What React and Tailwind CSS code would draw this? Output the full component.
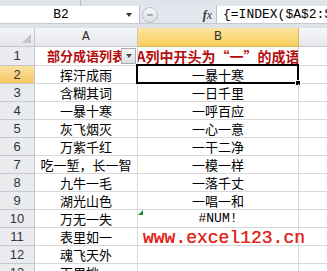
const colA = ['挥汗成雨', '含糊其词', '一暴十寒', '灰飞烟灭', '万紫千红', '吃一堑，长一智', '九牛一毛', '湖光山色', '万无一失', '表里如一', '魂飞天外', '百里挑一'];
const colB = ['一暴十寒', '一日千里', '一呼百应', '一心一意', '一干二净', '一模一样', '一落千丈', '一唱一和', '#NUM!', '', '', ''];

const cjk = { fontFamily: '"Noto Sans CJK SC", sans-serif' };
const mono = { fontFamily: '"Liberation Mono", monospace' };

const RowHead = ({ n, active }) => (
  <div
    className={`flex w-[35px] shrink-0 items-center justify-center border-b border-r border-[#c6c9ce] text-[13px] text-[#333] ${
      active ? 'bg-gradient-to-b from-[#fbe1a0] to-[#f6c862]' : 'bg-[#e9ebee]'
    }`}
    style={{ fontFamily: '"Liberation Sans", sans-serif' }}
  >
    {n}
  </div>
);

const DataRow = ({ n, a, b }) => (
  <div className="flex h-[18px]">
    <RowHead n={n} active={n === 2} />
    <div className="flex w-[103px] shrink-0 items-center justify-center whitespace-nowrap border-b border-r border-[#d8d8d8] text-[13px] text-black" style={cjk}>
      {a}
    </div>
    <div
      className="relative flex w-[161px] shrink-0 items-center justify-center whitespace-nowrap border-b border-r border-[#d8d8d8] text-[13px] text-black"
      style={b.startsWith('#') ? mono : cjk}
    >
      {b}
      {n === 2 && (
        <div className="absolute -left-[2px] -top-[2px] -right-[1px] -bottom-[1px] border-2 border-black">
          <div className="absolute -right-[4px] -bottom-[4px] h-[6px] w-[6px] border border-white bg-black" />
        </div>
      )}
      {n === 10 && (
        <div className="absolute left-0 top-0 h-0 w-0 border-l-[5px] border-t-[5px] border-l-transparent border-t-[#1e8b30] rotate-90" />
      )}
    </div>
    <div className="flex-1 border-b border-[#d8d8d8]" />
  </div>
);

export default function App() {
  return (
    <div className="relative h-[271px] w-[327px] overflow-hidden bg-white">
      {/* ribbon edge */}
      <div className="flex h-[6px] bg-[#dfe4ea]">
        <div className="w-[81px] border-r border-[#b7bec8]" />
      </div>

      {/* formula bar */}
      <div className="flex h-[18px] border-b border-[#c4cad3] bg-[#e4e8ee]">
        <div className="flex w-[140px] shrink-0 items-center border-r border-[#b9c0ca] bg-white">
          <span className="w-[122px] text-center text-[13px] text-black" style={mono}>B2</span>
          <span className="ml-[4px] h-0 w-0 border-l-[3px] border-r-[3px] border-t-[4px] border-l-transparent border-r-transparent border-t-[#333]" />
        </div>
        <div className="flex w-[76px] shrink-0 items-center">
          <div className="ml-[2px] flex h-[16px] w-[16px] items-center justify-center rounded-full border border-[#b9bec6] bg-gradient-to-b from-[#f7f8fa] to-[#d9dde3]">
            <div className="h-[2px] w-[6px] rounded bg-[#a4a9b0]" />
          </div>
          <span className="ml-auto mr-[4px] text-[12px] italic text-[#333]" style={{ fontFamily: '"Liberation Serif", serif' }}>
            <b>f</b>x
          </span>
        </div>
        <div className="flex flex-1 items-center overflow-hidden border-l border-[#b9c0ca] bg-white pl-[6px] whitespace-nowrap text-[13px] text-black" style={mono}>
          {'{=INDEX($A$2:$A$13'}
        </div>
      </div>

      <div className="h-[4px] bg-[#dfe3e8]" />

      {/* column headers */}
      <div className="flex h-[19px]">
        <div className="relative w-[35px] shrink-0 border-b border-r border-[#c6c9ce] bg-gradient-to-b from-[#f4f5f7] to-[#e3e5e8]">
          <div className="absolute bottom-[3px] right-[3px] h-0 w-0 border-b-[9px] border-l-[9px] border-b-[#c2c5ca] border-l-transparent" />
        </div>
        <div className="flex w-[103px] shrink-0 items-center justify-center border-b border-r border-[#c6c9ce] bg-gradient-to-b from-[#f5f6f8] to-[#e5e7ea] text-[13px] text-[#333]" style={mono}>
          A
        </div>
        <div className="flex w-[161px] shrink-0 items-center justify-center border-b border-r border-[#d9b45a] bg-gradient-to-b from-[#fde49f] to-[#f9cf5a] text-[13px] text-[#333]" style={mono}>
          B
        </div>
        <div className="flex-1 border-b border-[#c6c9ce] bg-gradient-to-b from-[#f5f6f8] to-[#e5e7ea]" />
      </div>

      {/* row 1 */}
      <div className="flex h-[19px]">
        <RowHead n={1} />
        <div className="relative flex w-[103px] shrink-0 items-center justify-center overflow-hidden whitespace-nowrap border-b border-r border-[#d8d8d8] text-[13px] font-bold text-[#b50d0d]" style={cjk}>
          部分成语列表
          <div className="absolute right-[1px] top-[1px] flex h-[16px] w-[15px] items-center justify-center border border-[#a9adb3] bg-gradient-to-b from-[#f8f8f8] to-[#dcdee2]">
            <span className="h-0 w-0 border-l-[3px] border-r-[3px] border-t-[4px] border-l-transparent border-r-transparent border-t-[#444]" />
          </div>
        </div>
        <div className="flex w-[161px] shrink-0 items-center justify-center overflow-hidden whitespace-nowrap border-b border-r border-[#d8d8d8] text-[14px] font-bold text-[#b50d0d]" style={cjk}>
          A列中开头为“一”的成语
        </div>
        <div className="flex-1 border-b border-[#d8d8d8]" />
      </div>

      {colA.map((a, i) => (
        <DataRow key={i} n={i + 2} a={a} b={colB[i]} />
      ))}

      {/* watermark */}
      <div className="absolute left-[143px] top-[228px] whitespace-nowrap text-[18px] leading-[20px] text-[#e3241d] [text-shadow:0_0_0.4px_#e3241d]" style={mono}>
        www.excel123.cn
      </div>
    </div>
  );
}
